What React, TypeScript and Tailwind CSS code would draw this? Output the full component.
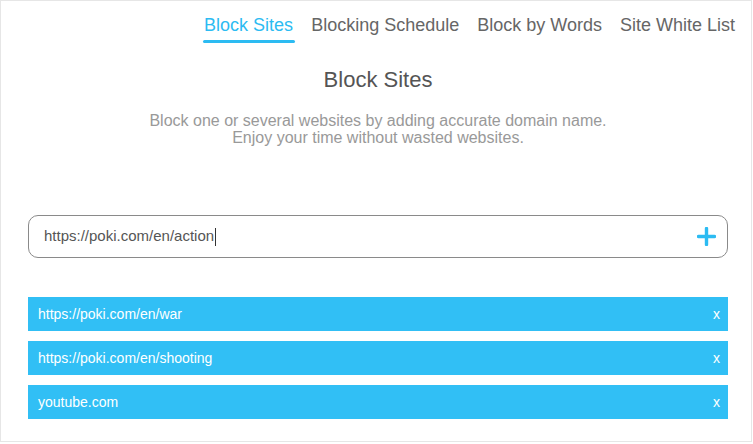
import React from 'react';

const tabs = ['Block Sites', 'Blocking Schedule', 'Block by Words', 'Site White List'];
const sites = ['https://poki.com/en/war', 'https://poki.com/en/shooting', 'youtube.com'];

const App: React.FC = () => {
  return (
    <div className="w-[752px] h-[442px] border border-[#e6e6e6] bg-white font-['Liberation_Sans',Arial,sans-serif] overflow-hidden">
      {/* Tabs */}
      <nav className="flex justify-end gap-[18px] pr-[16px] pt-[12px]">
        {tabs.map((t, i) => (
          <div key={t} className="flex flex-col items-center">
            <span className={`text-[18px] leading-[24px] ${i === 0 ? 'text-[#2cbbf2]' : 'text-[#666666]'}`}>{t}</span>
            {i === 0 && <div className="mt-[3px] h-[3px] w-[calc(100%+3px)] rounded-full bg-[#2cbbf2]" />}
          </div>
        ))}
      </nav>

      {/* Heading */}
      <div className="pl-[4px] text-center">
        <h1 className="mt-[24px] text-[22px] leading-[26px] text-[#555555]">Block Sites</h1>
        <p className="mt-[19px] text-[16px] leading-[17px] text-[#999999]">
          Block one or several websites by adding accurate domain name.
          <br />
          Enjoy your time without wasted websites.
        </p>
      </div>

      {/* Input */}
      <div className="ml-[27px] mt-[69px] flex h-[43px] w-[700px] items-center justify-between rounded-[10px] border border-[#8a8a8a] pl-[15px] pr-[11px]">
        <div className="flex items-center text-[15px] text-[#555555]">
          https://poki.com/en/action
          <span className="ml-[1px] inline-block h-[18px] w-[1px] bg-[#333333]" />
        </div>
        <svg width="19" height="19" viewBox="0 0 19 19">
          <path d="M9.5 1.5v16M1.5 9.5h16" stroke="#2cbbf2" strokeWidth="3.4" strokeLinecap="round" />
        </svg>
      </div>

      {/* Blocked list */}
      <div className="ml-[27px] mt-[39px] flex w-[700px] flex-col gap-[10px]">
        {sites.map((s) => (
          <div key={s} className="flex h-[34px] items-center justify-between bg-[#31bff5] pl-[10px] pr-[8px] text-[14px] text-white">
            <span>{s}</span>
            <span>x</span>
          </div>
        ))}
      </div>
    </div>
  );
};

export default App;
